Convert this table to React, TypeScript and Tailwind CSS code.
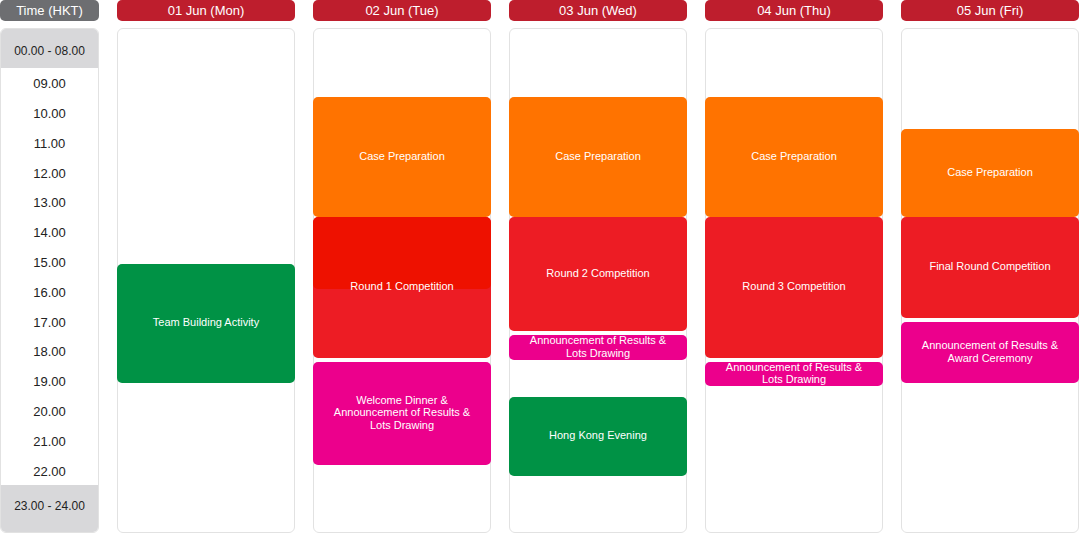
import React from "react";

interface Block {
  top: number;
  height: number;
  color: string;
  label: string[];
  overlay?: number;
}

const days: { title: string; events: Block[] }[] = [
  {
    title: "01 Jun (Mon)",
    events: [{ top: 235, height: 119, color: "bg-[#009245]", label: ["Team Building Activity"] }],
  },
  {
    title: "02 Jun (Tue)",
    events: [
      { top: 68, height: 120, color: "bg-[#ff7300]", label: ["Case Preparation"] },
      { top: 188, height: 141, color: "bg-[#ed1c24]", label: ["Round 1 Competition"], overlay: 72 },
      {
        top: 333,
        height: 103,
        color: "bg-[#ec008c]",
        label: ["Welcome Dinner &", "Announcement of Results &", "Lots Drawing"],
      },
    ],
  },
  {
    title: "03 Jun (Wed)",
    events: [
      { top: 68, height: 120, color: "bg-[#ff7300]", label: ["Case Preparation"] },
      { top: 188, height: 114, color: "bg-[#ed1c24]", label: ["Round 2 Competition"] },
      { top: 306, height: 25, color: "bg-[#ec008c]", label: ["Announcement of Results &", "Lots Drawing"] },
      { top: 368, height: 79, color: "bg-[#009245]", label: ["Hong Kong Evening"] },
    ],
  },
  {
    title: "04 Jun (Thu)",
    events: [
      { top: 68, height: 120, color: "bg-[#ff7300]", label: ["Case Preparation"] },
      { top: 188, height: 141, color: "bg-[#ed1c24]", label: ["Round 3 Competition"] },
      { top: 333, height: 24, color: "bg-[#ec008c]", label: ["Announcement of Results &", "Lots Drawing"] },
    ],
  },
  {
    title: "05 Jun (Fri)",
    events: [
      { top: 100, height: 88, color: "bg-[#ff7300]", label: ["Case Preparation"] },
      { top: 188, height: 101, color: "bg-[#ed1c24]", label: ["Final Round Competition"] },
      { top: 293, height: 61, color: "bg-[#ec008c]", label: ["Announcement of Results &", "Award Ceremony"] },
    ],
  },
];

const hours = ["09.00", "10.00", "11.00", "12.00", "13.00", "14.00", "15.00", "16.00", "17.00", "18.00", "19.00", "20.00", "21.00", "22.00"];

function EventBlock({ ev }: { ev: Block }) {
  return (
    <div
      className={`absolute left-[-1px] right-[-1px] rounded-[5px] overflow-hidden ${ev.color}`}
      style={{ top: ev.top, height: ev.height }}
    >
      {ev.overlay && (
        <div className="absolute left-0 right-0 top-0 rounded-[5px] bg-[#ee1100]" style={{ height: ev.overlay }} />
      )}
      <div className="relative flex h-full flex-col items-center justify-center pb-[2px] text-center text-[11px] leading-[12.5px] text-white">
        {ev.label.map((l) => (
          <span key={l}>{l}</span>
        ))}
      </div>
    </div>
  );
}

export default function App() {
  return (
    <div
      className="h-[533px] w-[1080px] overflow-hidden bg-white"
      style={{ fontFamily: '"Liberation Sans", Arial, sans-serif' }}
    >
      <div className="grid grid-cols-[99px_repeat(5,178px)] gap-x-[18px]">
        <div className="flex h-[21px] items-center justify-center rounded-[5px] bg-[#6d6e71] text-[13px] text-white">
          Time (HKT)
        </div>
        {days.map((d) => (
          <div
            key={d.title}
            className="flex h-[21px] items-center justify-center rounded-[5px] bg-[#be1e2d] text-[13px] text-white"
          >
            {d.title}
          </div>
        ))}

        <div className="mt-[7px] flex h-[505px] flex-col overflow-hidden rounded-[6px] border border-[#e2e2e2]">
          <div className="flex h-[39px] shrink-0 items-center justify-center pt-[4px] bg-[#d8d8da] text-[12px] text-[#222]">
            00.00 - 08.00
          </div>
          {hours.map((h) => (
            <div key={h} className="flex h-[29.8px] shrink-0 items-center justify-center pt-[2px] text-[13px] text-[#222]">
              {h}
            </div>
          ))}
          <div className="flex flex-1 items-center justify-center pb-[6px] bg-[#d8d8da] text-[12px] text-[#222]">
            23.00 - 24.00
          </div>
        </div>
        {days.map((d) => (
          <div key={d.title} className="relative mt-[7px] h-[505px] rounded-[6px] border border-[#e2e2e2]">
            {d.events.map((ev) => (
              <EventBlock key={ev.label.join()} ev={ev} />
            ))}
          </div>
        ))}
      </div>
    </div>
  );
}
